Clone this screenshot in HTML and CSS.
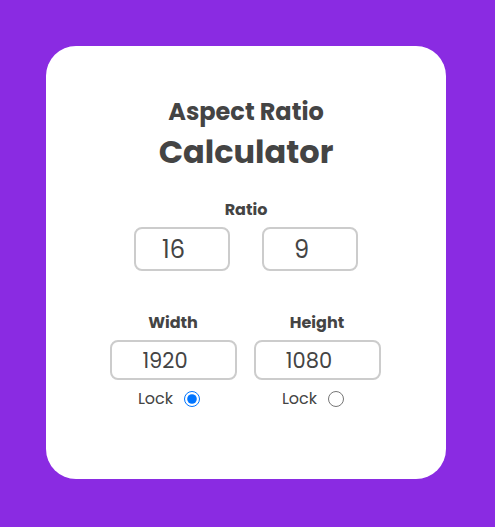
FILE: index.html
```
<!DOCTYPE html>
<html>
<head>
<meta charset="utf-8">
<link rel="stylesheet" href="styles.css">
</head>
<body>
<div class="card">
  <h1 class="title"><span class="t1">Aspect Ratio</span><span class="t2">Calculator</span></h1>
  <div class="ratio">
    <div class="label">Ratio</div>
    <div class="ratio-row">
      <input class="box box-ratio" type="text" value="16">
      <input class="box box-ratio" type="text" value="9">
    </div>
  </div>
  <div class="dims">
    <div class="col">
      <div class="label">Width</div>
      <input class="box box-dim" type="text" value="1920">
      <label class="lock">Lock <input class="radio" type="radio" name="lock" checked></label>
    </div>
    <div class="col">
      <div class="label">Height</div>
      <input class="box box-dim" type="text" value="1080">
      <label class="lock">Lock <input class="radio" type="radio" name="lock"></label>
    </div>
  </div>
</div>
</body>
</html>
```
FILE: styles.css
```
* { box-sizing: border-box; }
html, body { margin: 0; padding: 0; }
body {
  width: 495px;
  height: 527px;
  background: #8a2be2;
  display: flex;
  align-items: flex-start;
  justify-content: flex-start;
  font-family: "Poppins", "Inter", "DejaVu Sans", sans-serif;
  color: #444;
}
.card {
  margin-top: 46px;
  margin-left: 46px;
  width: 400px;
  height: 433px;
  background: #fff;
  border-radius: 30px;
  padding-top: 47px;
  display: flex;
  flex-direction: column;
  align-items: center;
}
.title {
  margin: 0;
  display: flex;
  flex-direction: column;
  align-items: center;
  font-weight: 700;
}
.t1 { font-size: 24px; line-height: 37px; }
.t2 { font-size: 32px; line-height: 44px; }
.ratio {
  margin-top: 25px;
  display: flex;
  flex-direction: column;
  align-items: center;
}
.label {
  font-size: 16px;
  font-weight: 700;
  line-height: 22px;
  color: #444;
}
.ratio-row {
  margin-top: 6px;
  display: flex;
  gap: 32px;
}
.box {
  font-family: inherit;
  color: #444;
  border: 2px solid #ccc;
  border-radius: 8px;
  text-align: center;
  outline: none;
  background: #fff;
  font-weight: 400;
}
.box-ratio {
  width: 96px;
  height: 44px;
  font-size: 24px;
  padding: 0 17px 0 0;
}
.box-dim {
  width: 127px;
  height: 40px;
  font-size: 21px;
  padding: 0 16px 0 0;
}
.dims {
  margin-top: 41px;
  margin-right: 2px;
  display: flex;
  gap: 17px;
}
.col {
  display: flex;
  flex-direction: column;
  align-items: center;
}
.col .label { margin-bottom: 6px; }
.lock {
  margin-top: 8px;
  margin-right: 8px;
  display: flex;
  align-items: center;
  gap: 11px;
  font-size: 16px;
  line-height: 22px;
  color: #444;
}
.radio {
  width: 16px;
  height: 16px;
  margin: 0;
  accent-color: #0075ff;
}
```
